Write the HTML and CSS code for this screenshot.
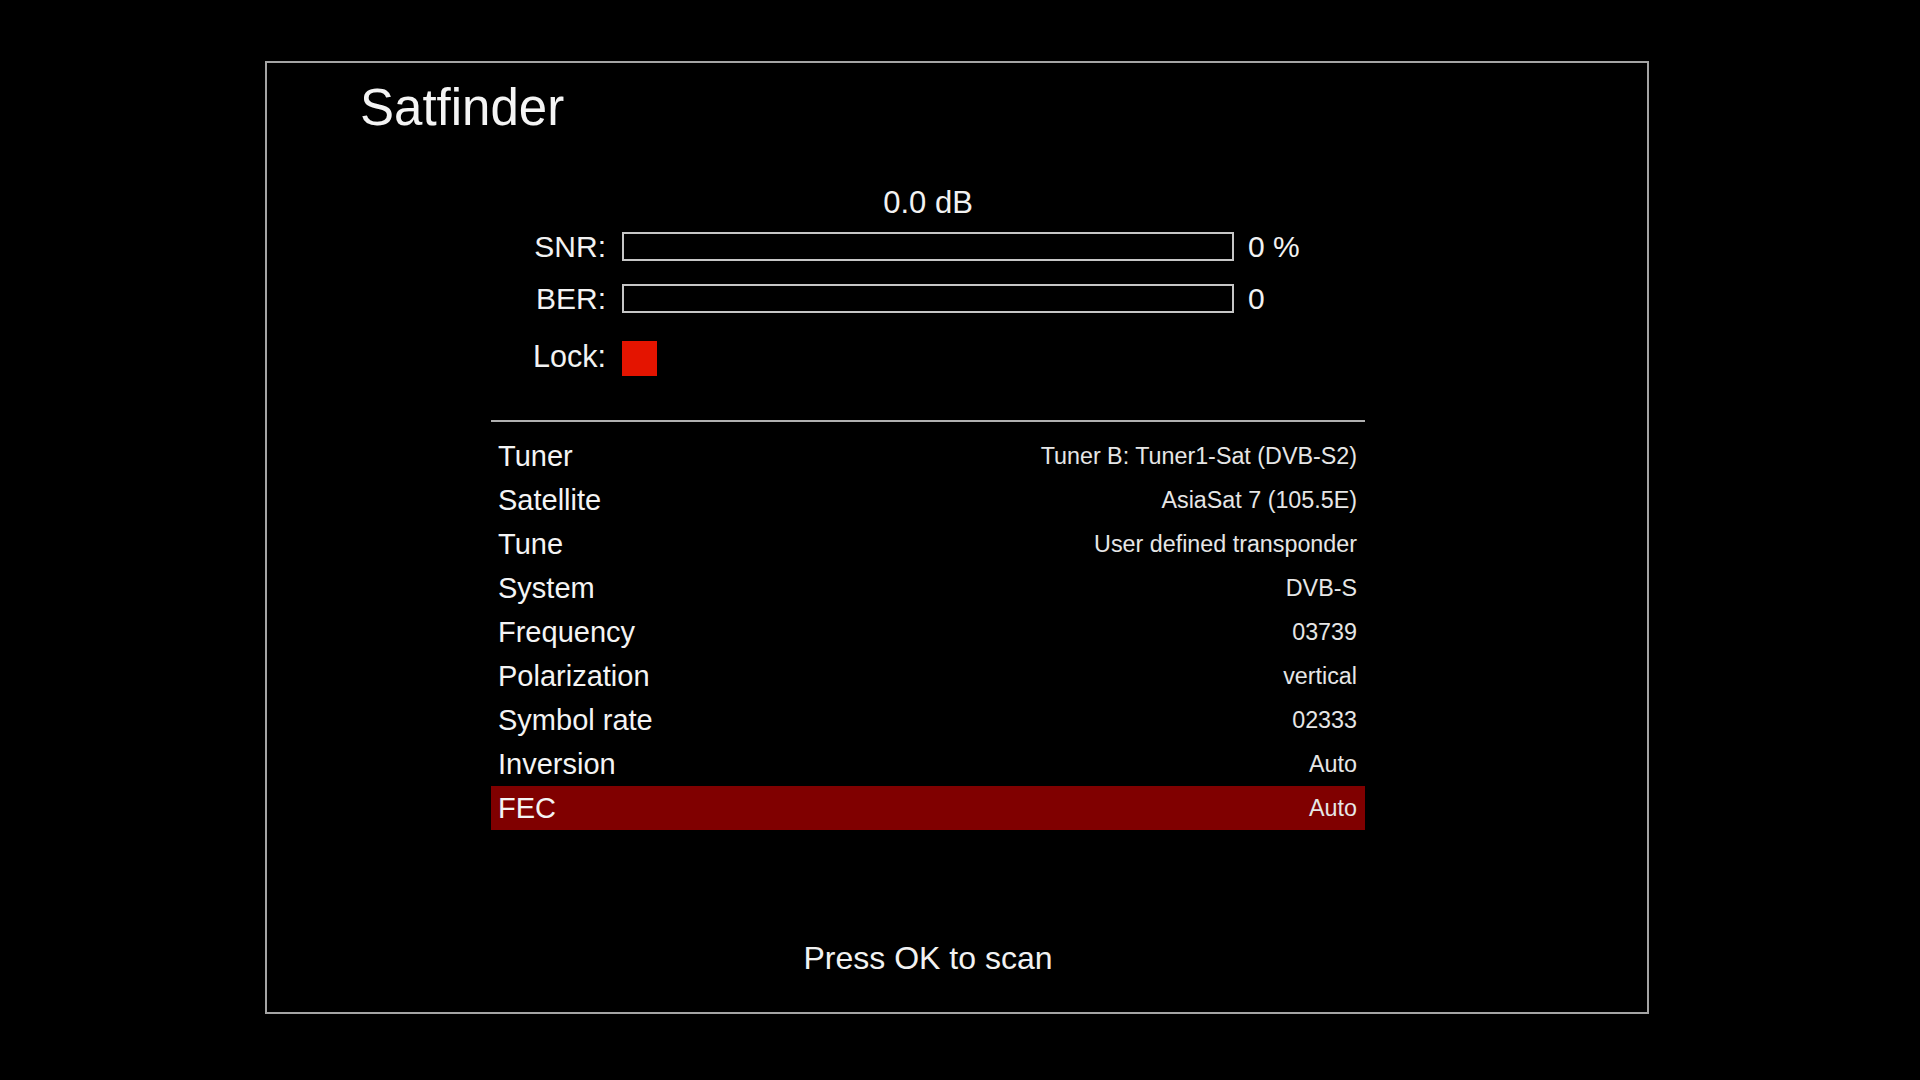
FILE: index.html
```html
<!DOCTYPE html>
<html>
<head>
<meta charset="utf-8">
<title>Satfinder</title>
<link rel="stylesheet" href="styles.css">
</head>
<body>
<div class="frame">
  <h1 class="title">Satfinder</h1>
  <div class="content">
    <div class="db-row"><span class="db">0.0 dB</span></div>
    <div class="meter snr">
      <span class="m-label">SNR:</span>
      <div class="bar"></div>
      <span class="m-value">0 %</span>
    </div>
    <div class="meter ber">
      <span class="m-label">BER:</span>
      <div class="bar"></div>
      <span class="m-value">0</span>
    </div>
    <div class="meter lock">
      <span class="m-label">Lock:</span>
      <div class="lamp"></div>
    </div>
    <div class="sep"></div>
    <ul class="list">
      <li class="row"><span class="k">Tuner</span><span class="v">Tuner B: Tuner1-Sat (DVB-S2)</span></li>
      <li class="row"><span class="k">Satellite</span><span class="v">AsiaSat 7 (105.5E)</span></li>
      <li class="row"><span class="k">Tune</span><span class="v">User defined transponder</span></li>
      <li class="row"><span class="k">System</span><span class="v">DVB-S</span></li>
      <li class="row"><span class="k">Frequency</span><span class="v">03739</span></li>
      <li class="row"><span class="k">Polarization</span><span class="v">vertical</span></li>
      <li class="row"><span class="k">Symbol rate</span><span class="v">02333</span></li>
      <li class="row"><span class="k">Inversion</span><span class="v">Auto</span></li>
      <li class="row selected"><span class="k">FEC</span><span class="v">Auto</span></li>
    </ul>
    <div class="hint">Press OK to scan</div>
  </div>
</div>
</body>
</html>
```

FILE: styles.css
```css
html, body {
  margin: 0;
  padding: 0;
  background: #000;
}
body {
  width: 1920px;
  height: 1080px;
  overflow: hidden;
  font-family: "Liberation Sans", Arial, sans-serif;
  color: #f2f2f2;
}
.frame {
  box-sizing: border-box;
  margin-left: 265px;
  margin-top: 61px;
  width: 1384px;
  height: 953px;
  border: 2px solid #a4a4a4;
}
.title {
  margin: 17px 0 0 0;
  padding-left: 93px;
  font-size: 51px;
  font-weight: normal;
  line-height: 56px;
  color: #f4f4f4;
}
.content {
  margin-left: 224px;
  width: 874px;
  margin-top: 51px;
}
.db-row {
  display: flex;
  padding-left: 131px;
}
.db {
  width: 612px;
  text-align: center;
  font-size: 31px;
  line-height: 32px;
}
.meter {
  display: flex;
  align-items: center;
}
.snr { margin-top: 13px; }
.ber { margin-top: 23px; }
.lock { margin-top: 28px; align-items: flex-start; }
.m-label {
  width: 115px;
  text-align: right;
  font-size: 30px;
  line-height: 29px;
  margin-right: 16px;
}
.lock .m-label { line-height: 31px; font-size: 30.5px; }
.bar {
  box-sizing: border-box;
  width: 612px;
  height: 29px;
  border: 2px solid #c6c6c6;
}
.m-value {
  margin-left: 14px;
  font-size: 30px;
  line-height: 29px;
}
.lamp {
  width: 35px;
  height: 35px;
  background: #e41400;
}
.sep {
  margin-top: 44px;
  height: 2px;
  background: #b0b0b0;
}
.list {
  list-style: none;
  margin: 12px 0 0 0;
  padding: 0;
}
.row {
  display: flex;
  justify-content: space-between;
  align-items: center;
  height: 44px;
  padding: 0 8px 0 7px;
}
.k {
  font-size: 29px;
  line-height: 44px;
  color: #f4f4f4;
}
.v {
  font-size: 23.3px;
  line-height: 44px;
  color: #e6e6e6;
}
.selected {
  background: #800000;
}
.hint {
  margin-top: 112px;
  text-align: center;
  font-size: 32px;
  line-height: 32px;
}
```
